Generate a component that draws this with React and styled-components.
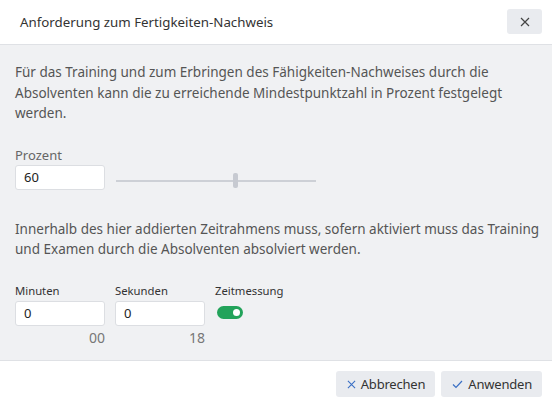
import React from "react";
import styled, { createGlobalStyle } from "styled-components";

const Global = createGlobalStyle`
  html, body { margin: 0; padding: 0; background: #fff; }
  body { font-family: "Noto Sans", "Open Sans", sans-serif; }
  * { box-sizing: border-box; }
`;

const Dialog = styled.div`
  width: 552px;
  height: 407px;
  display: flex;
  flex-direction: column;
  background: #fff;
  color: #555;
  font-size: 13px;
`;

const Header = styled.div`
  height: 45px;
  flex: none;
  display: flex;
  align-items: center;
  justify-content: space-between;
  padding: 0 10px 0 20px;
  border-bottom: 1px solid #dfe1e5;
`;

const Title = styled.h1`
  margin: 0;
  font-size: 13.3px;
  font-weight: 400;
  color: #333;
`;

const IconButton = styled.button`
  width: 35px;
  height: 25px;
  border: 0;
  border-radius: 3px;
  background: #e9ebef;
  color: #555;
  display: flex;
  align-items: center;
  justify-content: center;
  padding: 0;
  margin-top: -1px;
`;

const Body = styled.div`
  flex: 1;
  background: #f0f1f3;
  padding: 17px 10px 0 15px;
  display: flex;
  flex-direction: column;
`;

const Text = styled.p`
  margin: 0;
  font-size: 13.5px;
  line-height: 20.5px;
  color: #555;
`;

const Field = styled.div`
  display: flex;
  flex-direction: column;
  width: ${(p) => p.$w || 90}px;
`;

const Label = styled.label`
  line-height: 16px;
  margin-bottom: 2px;
  font-size: ${(p) => (p.$small ? "11.3px" : "13px")};
  color: ${(p) => (p.$small ? "#333" : "#666")};
`;

const Input = styled.input`
  width: 90px;
  height: 25px;
  border: 1px solid #dcdee2;
  border-radius: 3px;
  background: #fff;
  padding: 0 8px;
  font: inherit;
  font-size: 13px;
  color: #222;
  outline: none;
`;

const PercentRow = styled.div`
  display: flex;
  align-items: flex-end;
  gap: 11px;
  margin-top: 23px;
  margin-bottom: 29px;
`;

const Track = styled.div`
  position: relative;
  width: 200px;
  height: 2px;
  background: #cdd0d6;
  margin-bottom: 8px;
`;

const Thumb = styled.div`
  position: absolute;
  top: -7px;
  width: 5px;
  height: 15px;
  border-radius: 2px;
  background: #c7cad1;
`;

const TimeRow = styled.div`
  display: flex;
  gap: 10px;
  margin-top: 23px;
`;

const Hint = styled.div`
  text-align: right;
  font-size: 14px;
  color: #777;
  margin-top: 4px;
  line-height: 16px;
`;

const Toggle = styled.div`
  width: 26px;
  height: 13px;
  border-radius: 7px;
  background: #22a35a;
  position: relative;
  margin: 5px 0 0 2px;
  &::after {
    content: "";
    position: absolute;
    right: 3px;
    top: 3px;
    width: 7px;
    height: 7px;
    border-radius: 50%;
    background: #fff;
  }
`;

const Footer = styled.div`
  height: 47px;
  flex: none;
  border-top: 1px solid #dfe1e5;
  display: flex;
  justify-content: flex-end;
  align-items: flex-start;
  gap: 6px;
  padding: 10px 10px 0;
`;

const Button = styled.button`
  height: 26px;
  border: 0;
  border-radius: 3px;
  background: #e9ebef;
  color: #333;
  font: inherit;
  font-size: 13px;
  display: flex;
  align-items: center;
  gap: 5px;
  padding: 0 10px 0 11px;
  letter-spacing: -0.2px;
  svg { color: #3a6fc4; }
`;

const XIcon = ({ size = 10, color = "currentColor" }) => (
  <svg width={size} height={size} viewBox="0 0 10 10" fill="none">
    <path d="M1 1L9 9M9 1L1 9" stroke={color} strokeWidth="1.2" />
  </svg>
);

const CheckIcon = () => (
  <svg width="11" height="9" viewBox="0 0 11 9" fill="none">
    <path d="M1 4.5L4 7.5L10 1" stroke="currentColor" strokeWidth="1.2" />
  </svg>
);

export default function App() {
  return (
    <>
      <Global />
      <Dialog>
        <Header>
          <Title>Anforderung zum Fertigkeiten-Nachweis</Title>
          <IconButton aria-label="Schließen">
            <XIcon size={10} color="#444" />
          </IconButton>
        </Header>
        <Body>
          <Text>
            Für das Training und zum Erbringen des Fähigkeiten-Nachweises durch die
            Absolventen kann die zu erreichende Mindestpunktzahl in Prozent festgelegt
            werden.
          </Text>
          <PercentRow>
            <Field>
              <Label>Prozent</Label>
              <Input defaultValue="60" />
            </Field>
            <Track>
              <Thumb style={{ left: "58.5%" }} />
            </Track>
          </PercentRow>
          <Text>
            Innerhalb des hier addierten Zeitrahmens muss, sofern aktiviert muss das Training
            und Examen durch die Absolventen absolviert werden.
          </Text>
          <TimeRow>
            <Field>
              <Label $small>Minuten</Label>
              <Input defaultValue="0" />
              <Hint>00</Hint>
            </Field>
            <Field>
              <Label $small>Sekunden</Label>
              <Input defaultValue="0" />
              <Hint>18</Hint>
            </Field>
            <Field>
              <Label $small>Zeitmessung</Label>
              <Toggle />
            </Field>
          </TimeRow>
        </Body>
        <Footer>
          <Button>
            <XIcon size={9} />
            Abbrechen
          </Button>
          <Button>
            <CheckIcon />
            Anwenden
          </Button>
        </Footer>
      </Dialog>
    </>
  );
}
